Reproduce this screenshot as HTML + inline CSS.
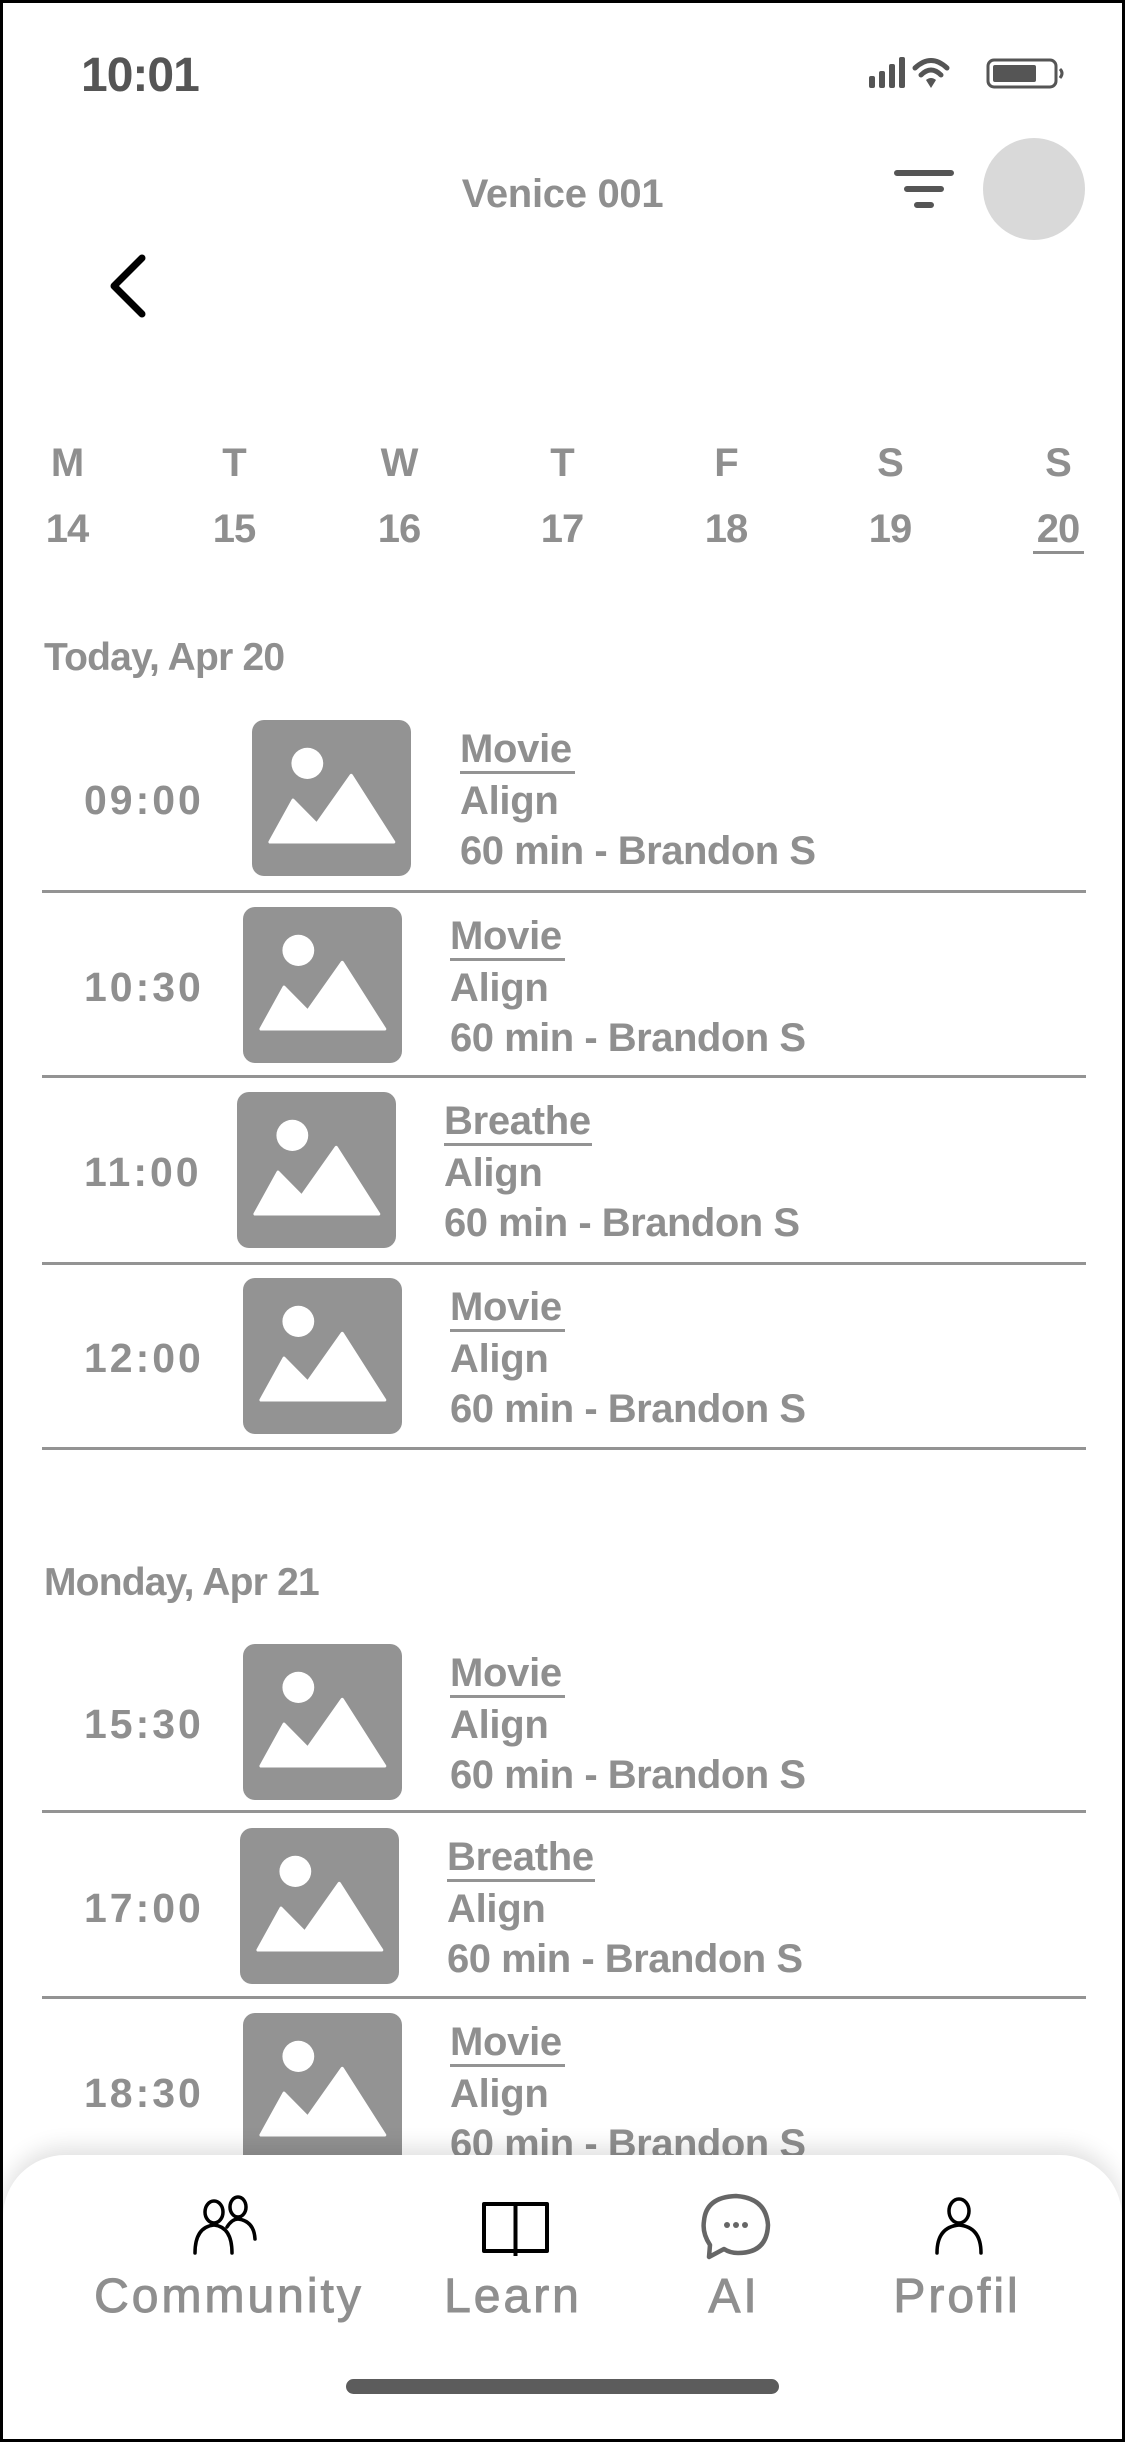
<!DOCTYPE html>
<html><head><meta charset="utf-8"><style>
*{margin:0;padding:0;box-sizing:border-box}
body{width:1125px;height:2442px;overflow:hidden;background:#fff;font-family:"Liberation Sans",sans-serif;position:relative}
.frame{position:absolute;left:0;top:0;width:1125px;height:2442px;border:3px solid #000;z-index:20;pointer-events:none}
.t{position:absolute;white-space:nowrap;font-weight:bold;color:#8f8f8f;line-height:1}
.img{position:absolute;width:159px;height:156px;background:#939393;border-radius:12px}
.img svg{width:100%;height:100%}
.hr{position:absolute;left:42px;width:1044px;height:3px;background:#939393}
.day{position:absolute;width:60px;text-align:center;font-size:40px;font-weight:bold;color:#8f8f8f;line-height:1;letter-spacing:-1px}
.nav{position:absolute;left:3px;top:2155px;width:1119px;height:284px;background:#fff;border-radius:62px 62px 0 0;box-shadow:0 -8px 22px rgba(0,0,0,0.12);z-index:10}
.lab{position:absolute;font-size:48px;color:#8f8f8f;text-align:center;width:320px;line-height:1;font-weight:normal;letter-spacing:3px;-webkit-text-stroke:1px #8f8f8f}
</style></head><body>
<div class="frame"></div>

<div class="t" style="left:81px;top:52px;font-size:48px;color:#555;letter-spacing:-1px">10:01</div>
<svg style="position:absolute;left:868px;top:56px" width="202" height="34" viewBox="0 0 202 34">
<rect x="1" y="20" width="6" height="12" rx="2" fill="#555"/>
<rect x="11" y="15" width="6" height="17" rx="2" fill="#555"/>
<rect x="21" y="8" width="6" height="24" rx="2" fill="#555"/>
<rect x="31" y="1" width="6" height="31" rx="2" fill="#555"/>
<path d="M47 12 Q63 -3 79 12" stroke="#555" stroke-width="5" fill="none" stroke-linecap="round"/>
<path d="M53 19 Q63 9 73 19" stroke="#555" stroke-width="5" fill="none" stroke-linecap="round"/>
<path d="M58 24 L63 32 L68 24 Q63 20 58 24Z" fill="#555"/>
<rect x="120" y="4" width="68" height="27" rx="6" stroke="#555" stroke-width="3" fill="none"/>
<rect x="125" y="9" width="43" height="17" rx="2" fill="#555"/>
<path d="M192 13 q4 4 0 9" stroke="#555" stroke-width="3" fill="none"/>
</svg>

<div class="t" style="left:400px;top:174px;width:325px;text-align:center;font-size:40px;letter-spacing:-0.3px">Venice 001</div>
<svg style="position:absolute;left:893px;top:165px" width="62" height="48" viewBox="0 0 62 48">
<path d="M4 8H58M14 24H48M24 40H38" stroke="#555" stroke-width="6" stroke-linecap="round"/>
</svg>
<div style="position:absolute;left:983px;top:138px;width:102px;height:102px;border-radius:50%;background:#d9d9d9"></div>
<svg style="position:absolute;left:100px;top:250px" width="60" height="72" viewBox="0 0 60 72">
<path d="M42 8 L14 36 L42 64" stroke="#000" stroke-width="7" fill="none" stroke-linecap="round" stroke-linejoin="round"/>
</svg>

<div class="day" style="left:37px;top:443px">M</div><div class="day" style="left:37px;top:509px">14</div>
<div class="day" style="left:204px;top:443px">T</div><div class="day" style="left:204px;top:509px">15</div>
<div class="day" style="left:369px;top:443px">W</div><div class="day" style="left:369px;top:509px">16</div>
<div class="day" style="left:532px;top:443px">T</div><div class="day" style="left:532px;top:509px">17</div>
<div class="day" style="left:696px;top:443px">F</div><div class="day" style="left:696px;top:509px">18</div>
<div class="day" style="left:860px;top:443px">S</div><div class="day" style="left:860px;top:509px">19</div>
<div class="day" style="left:1028px;top:443px">S</div><div class="day" style="left:1028px;top:509px">20</div>
<div style="position:absolute;left:1033px;top:551px;width:51px;height:3px;background:#8f8f8f"></div>

<div class="t" style="left:44px;top:638px;font-size:39px;letter-spacing:-0.8px">Today, Apr 20</div>
<div class="t" style="left:44px;top:1563px;font-size:39px;letter-spacing:-0.8px">Monday, Apr 21</div>

<div id="rows"></div>
<script>
var rows=[[252,720,460,"09:00","Movie",890],[243,907,450,"10:30","Movie",1075],[237,1092,444,"11:00","Breathe",1262],[243,1278,450,"12:00","Movie",1447],[243,1644,450,"15:30","Movie",1810],[240,1828,447,"17:00","Breathe",1996],[243,2013,450,"18:30","Movie",0]];
var h="";
var svg='<svg viewBox="0 0 100 100" preserveAspectRatio="none"><ellipse cx="34.8" cy="27.8" rx="10" ry="10" fill="#fff"/><path d="M11.3 78.2 L25.8 51.4 L40.7 66.8 L62.4 35.5 L89.1 78.2Z" fill="#fff" stroke="#fff" stroke-width="2" stroke-linejoin="round"/></svg>';
rows.forEach(function(r){
 h+='<div class="img" style="left:'+r[0]+'px;top:'+r[1]+'px">'+svg+'</div>';
 h+='<div class="t" style="left:84px;top:'+(r[1]+60)+'px;font-size:41px;letter-spacing:3px">'+r[3]+'</div>';
 h+='<div class="t" style="left:'+r[2]+'px;top:'+(r[1]+9)+'px;font-size:40px;letter-spacing:-0.3px">'+r[4]+'</div>';
 h+='<div style="position:absolute;left:'+r[2]+'px;top:'+(r[1]+51)+'px;width:'+(r[4]=="Movie"?115:148)+'px;height:3px;background:#939393"></div>';
 h+='<div class="t" style="left:'+r[2]+'px;top:'+(r[1]+61)+'px;font-size:40px;letter-spacing:-0.3px">Align</div>';
 h+='<div class="t" style="left:'+r[2]+'px;top:'+(r[1]+111)+'px;font-size:40px;letter-spacing:-0.5px">60 min - Brandon S</div>';
 if(r[5])h+='<div class="hr" style="top:'+r[5]+'px"></div>';
});
document.getElementById('rows').innerHTML=h;
</script>

<div class="nav">
<svg style="position:absolute;left:188px;top:40px" width="80" height="62" viewBox="0 0 80 62">
<g stroke="#000" stroke-width="3.5" fill="none" stroke-linecap="round">
<ellipse cx="23" cy="17" rx="9" ry="11"/><path d="M4 58 Q4 32 23 30 Q41 32 41 58"/>
<ellipse cx="47" cy="12" rx="8" ry="10"/><path d="M36 32 Q41 24 47 24 Q63 26 64 44"/>
</g></svg>
<svg style="position:absolute;left:475px;top:46px" width="75" height="58" viewBox="0 0 75 58">
<g stroke="#000" stroke-width="4" fill="none" stroke-linejoin="round">
<path d="M6 3H69V50H6Z"/><path d="M37.5 3V55"/>
</g></svg>
<svg style="position:absolute;left:697px;top:38px" width="75" height="68" viewBox="0 0 75 68">
<path d="M10 52 Q2 40 4 28 Q6 4 36 3 Q66 5 68 32 Q67 60 38 60 Q30 60 24 56 L9 64 Z" stroke="#666" stroke-width="4.5" fill="none" stroke-linejoin="round"/>
<circle cx="27" cy="32" r="3" fill="#666"/><circle cx="36" cy="32" r="3" fill="#666"/><circle cx="45" cy="32" r="3" fill="#666"/>
</svg>
<svg style="position:absolute;left:928px;top:42px" width="56" height="60" viewBox="0 0 56 60">
<g stroke="#000" stroke-width="3.5" fill="none" stroke-linecap="round">
<ellipse cx="28" cy="14" rx="10" ry="12"/><path d="M6 56 Q6 30 28 28 Q50 30 50 56"/>
</g></svg>
<div class="lab" style="left:66px;top:118px">Community</div>
<div class="lab" style="left:350px;top:118px">Learn</div>
<div class="lab" style="left:571px;top:118px">AI</div>
<div class="lab" style="left:794px;top:118px">Profil</div>
<div style="position:absolute;left:343px;top:224px;width:433px;height:15px;border-radius:8px;background:#5c5c5c"></div>
</div>
</body></html>
